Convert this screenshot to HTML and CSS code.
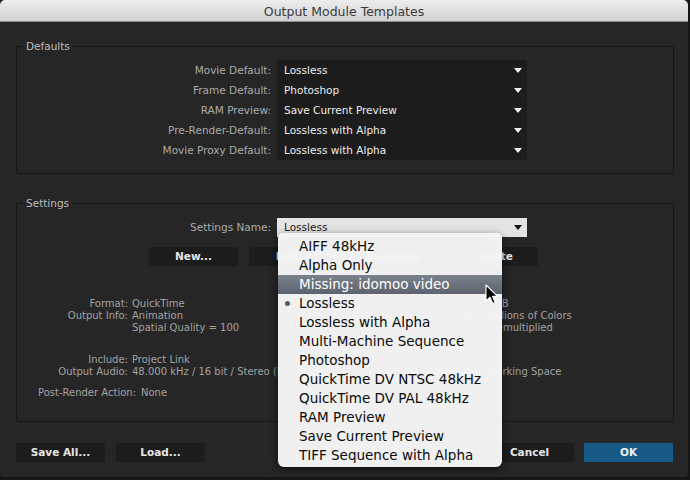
FILE: index.html
```html
<!DOCTYPE html>
<html>
<head>
<meta charset="utf-8">
<link rel="stylesheet" href="styles.css">
</head>
<body>
<div class="window">
  <div class="titlebar">Output Module Templates</div>
  <div class="content">
    <fieldset class="group defaults">
      <legend>Defaults</legend>
      <div class="form-grid">
        <div class="lbl">Movie Default:</div><div class="dd">Lossless<span class="arrow"></span></div>
        <div class="lbl">Frame Default:</div><div class="dd">Photoshop<span class="arrow"></span></div>
        <div class="lbl">RAM Preview:</div><div class="dd">Save Current Preview<span class="arrow"></span></div>
        <div class="lbl">Pre-Render-Default:</div><div class="dd">Lossless with Alpha<span class="arrow"></span></div>
        <div class="lbl">Movie Proxy Default:</div><div class="dd">Lossless with Alpha<span class="arrow"></span></div>
      </div>
    </fieldset>

    <fieldset class="group settings">
      <legend>Settings</legend>
      <div class="form-grid name-row">
        <div class="lbl">Settings Name:</div><div class="dd active">Lossless<span class="arrow dark"></span></div>
      </div>
      <div class="btn-row">
        <div class="btn">New...</div>
        <div class="btn">Edit...</div>
        <div class="btn">Duplicate</div>
        <div class="btn">Delete</div>
      </div>
      <div class="info info-a">
        <div class="il">Format:</div><div class="iv">QuickTime</div><div class="il">Channels:</div><div class="iv">RGB</div>
        <div class="il">Output Info:</div><div class="iv">Animation</div><div class="il">Depth:</div><div class="iv">Millions of Colors</div>
        <div class="il"></div><div class="iv">Spatial Quality = 100</div><div class="il">Color:</div><div class="iv">Premultiplied</div>
      </div>
      <div class="info info-b">
        <div class="il">Include:</div><div class="iv">Project Link</div><div class="il"></div><div class="iv"></div>
        <div class="il">Output Audio:</div><div class="iv">48.000 kHz / 16 bit / Stereo (Lossless)</div><div class="il">Profile:</div><div class="iv">Working Space</div>
      </div>
      <div class="post">Post-Render Action:<span class="post-v">None</span></div>
    </fieldset>

    <div class="bottom-row">
      <div class="left-btns">
        <div class="btn">Save All...</div>
        <div class="btn">Load...</div>
      </div>
      <div class="right-btns">
        <div class="btn cancel">Cancel</div>
        <div class="btn ok">OK</div>
      </div>
    </div>
  </div>

  <div class="menu">
    <div class="mi">AIFF 48kHz</div>
    <div class="mi">Alpha Only</div>
    <div class="mi hl">Missing: idomoo video</div>
    <div class="mi checked">Lossless</div>
    <div class="mi">Lossless with Alpha</div>
    <div class="mi">Multi-Machine Sequence</div>
    <div class="mi">Photoshop</div>
    <div class="mi">QuickTime DV NTSC 48kHz</div>
    <div class="mi">QuickTime DV PAL 48kHz</div>
    <div class="mi">RAM Preview</div>
    <div class="mi">Save Current Preview</div>
    <div class="mi">TIFF Sequence with Alpha</div>
  </div>

  <svg class="cursor" width="14" height="22" viewBox="0 0 14 22">
    <path d="M1 1 L1 17 L5 13.2 L7.8 19.6 L10.2 18.6 L7.5 12.4 L12.6 12.4 Z" fill="#000" stroke="#fff" stroke-width="1.1" stroke-linejoin="round"/>
  </svg>
</div>
</body>
</html>
```
FILE: styles.css
```css
html, body {
  margin: 0;
  padding: 0;
}
body {
  width: 690px;
  height: 480px;
  background: #161616;
  overflow: hidden;
  font-family: "DejaVu Sans", "Liberation Sans", sans-serif;
}
.window {
  position: relative;
  width: 688px;
  height: 477px;
  background: #262626;
  border-radius: 5px 5px 4px 4px;
  overflow: hidden;
}
.titlebar {
  height: 22px;
  line-height: 23px;
  text-align: center;
  font-size: 12.5px;
  color: #3a3a3a;
  background: linear-gradient(#ededed, #d2d2d2);
  border-bottom: 1px solid #8d8d8d;
  box-sizing: border-box;
}
.content {
  padding: 0 0 0 16px;
}
.group {
  width: 658px;
  box-sizing: border-box;
  margin: 0;
  padding: 0;
  border: 1px solid #171717;
  min-width: 0;
}
.group legend {
  font-size: 10.5px;
  line-height: 14px;
  color: #bdbdbd;
  padding: 0 3px;
  margin-left: 6px;
}
.defaults {
  margin-top: 17px;
  padding-top: 7px;
  padding-bottom: 13px;
}
.settings {
  margin-top: 22px;
  padding-top: 8px;
  padding-bottom: 22px;
}
.form-grid {
  display: grid;
  grid-template-columns: 254px 250px;
  column-gap: 6px;
  font-size: 10.5px;
}
.lbl {
  text-align: right;
  color: #ababab;
  height: 20px;
  line-height: 20px;
}
.dd {
  position: relative;
  height: 20px;
  line-height: 20px;
  background: #1c1c1c;
  color: #ececec;
  padding-left: 7px;
}
.name-row .lbl,
.name-row .dd {
  height: 19px;
  line-height: 19px;
}
.dd.active {
  background: #e4e4e4;
  color: #1a1a1a;
}
.arrow {
  position: absolute;
  right: 5px;
  top: 8px;
  width: 0;
  height: 0;
  border-left: 4.5px solid transparent;
  border-right: 4.5px solid transparent;
  border-top: 5px solid #f0f0f0;
}
.arrow.dark {
  border-top-color: #111;
  top: 7px;
}
.btn-row {
  display: flex;
  gap: 11px;
  margin-top: 10px;
  padding-left: 132px;
}
.btn {
  width: 89px;
  height: 19px;
  line-height: 19px;
  background: #1c1c1c;
  color: #e6e6e6;
  font-size: 10.5px;
  font-weight: bold;
  text-align: center;
}
.info {
  display: grid;
  grid-template-columns: 111px 240px 107px 1fr;
  column-gap: 4px;
  font-size: 10px;
  line-height: 12px;
  color: #a2a2a2;
  white-space: nowrap;
}
.il {
  text-align: right;
}
.iv {
  overflow: hidden;
}
.info-a {
  margin-top: 32px;
}
.info-b {
  margin-top: 20px;
}
.post {
  margin-top: 9px;
  padding-left: 21px;
  font-size: 10px;
  line-height: 12px;
  color: #a2a2a2;
}
.post-v {
  margin-left: 5px;
}
.bottom-row {
  display: flex;
  justify-content: space-between;
  width: 657px;
  margin-top: 21px;
}
.left-btns,
.right-btns {
  display: flex;
  gap: 11px;
}
.btn.cancel {
  width: 89px;
  margin-right: -1px;
}
.btn.ok {
  background: #175a88;
  color: #f2f2f2;
}
.menu {
  position: absolute;
  left: 278px;
  top: 233px;
  width: 224px;
  height: 234px;
  box-sizing: border-box;
  padding-top: 4px;
  background: rgba(244, 244, 244, 0.985);
  border-radius: 5px 5px 6px 6px;
  box-shadow: 0 3px 10px rgba(0, 0, 0, 0.55);
}
.mi {
  position: relative;
  height: 19px;
  line-height: 19px;
  padding-left: 21px;
  font-size: 13.5px;
  color: #0a0a0a;
  white-space: nowrap;
}
.mi.hl {
  background: linear-gradient(#7a828e, #5c636e);
  color: #fff;
}
.mi.checked::before {
  content: "";
  position: absolute;
  left: 7px;
  top: 7px;
  width: 5px;
  height: 5px;
  border-radius: 50%;
  background: #5a5a5a;
}
.cursor {
  position: absolute;
  left: 485px;
  top: 284px;
}
```
